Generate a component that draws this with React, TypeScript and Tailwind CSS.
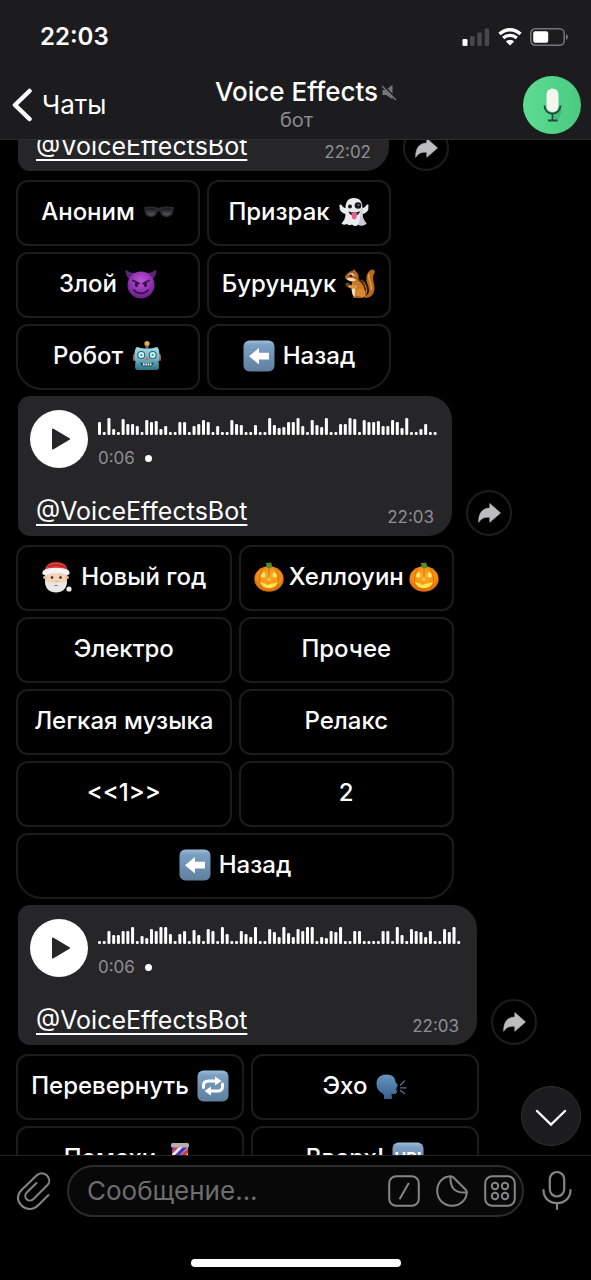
import React from "react";

type EmojiName =
  | "glasses" | "ghost" | "devil" | "chipmunk" | "robot" | "back" | "santa"
  | "pumpkin" | "repeat" | "speaking" | "barber" | "up";

function TileGradient({ id }: { id: string }) {
  return (
    <>
      <defs>
        <linearGradient id={id} x1="0" y1="0" x2="0" y2="1">
          <stop offset="0" stopColor="#9cc0de" />
          <stop offset="0.15" stopColor="#7c9fc2" />
          <stop offset="1" stopColor="#5f7f9f" />
        </linearGradient>
      </defs>
      <rect x="0.5" y="0.5" width="31" height="31" rx="6" fill={`url(#${id})`} />
    </>
  );
}

const emojis: Record<EmojiName, React.ReactNode> = {
  glasses: (
    <>
      <defs>
        <linearGradient id="lens" x1="0" y1="0" x2="0" y2="1">
          <stop offset="0" stopColor="#15181a" />
          <stop offset="1" stopColor="#555a5e" />
        </linearGradient>
      </defs>
      <path d="M1 11.5 C6 10 12 10.5 15.500 12 C19 10.500 26 10 31 11.500 L30.500 14 C30 19 27.500 21 23.500 21 C19.500 21 17.500 18.500 17 15.500 L14.500 15.500 C14 18.500 12 21 8 21 C4 21 2 19 1.500 14Z" fill="#2a2b2d" />
      <path d="M3 13 C6 12 11 12 13.500 13.500 C13 17.500 11 19.500 8 19.500 C5 19.500 3 17.500 3 13Z" fill="url(#lens)" />
      <path d="M18 13.500 C21 12 26 12 29 13 C29 17.500 27 19.500 23.500 19.500 C20.500 19.500 18.500 17.500 18 13.500Z" fill="url(#lens)" />
    </>
  ),
  ghost: (
    <>
      <path d="M16 2 C10 2 7.500 6 7.500 12 C5.500 12 4.500 10.500 3.500 9 C2.500 8 1 8.800 1.500 10.200 C2 12 1.200 13 2.200 14.200 C3.500 16.500 5.500 17.500 7.500 18 C7.500 22 6 24.500 3.500 27.500 C5 29 7 29 9 28 C10.500 29.500 12.500 29.800 14 28.500 C16 30.500 18.500 30.500 20 28.500 C22 30 25.500 30 28.500 27.500 C26 24.500 24.500 22 24.500 18 C27 17.500 28.500 16.500 30 14.200 C31 13 29.800 12 30.500 10.200 C31 8.800 29.500 8 28.500 9 C27.500 10.500 26.500 12 24.500 12 C24.500 6 22 2 16 2Z" fill="#e9ebef" />
      <path d="M24.500 18 C24.500 22 26 24.500 28.500 27.500 C25.500 30 22 30 20 28.500 C22.500 24 22.500 18 22.500 12 L24.500 12Z" fill="#c6cad2" />
      <circle cx="12" cy="10.500" r="2" fill="#17181b" />
      <circle cx="20" cy="9.500" r="3.300" fill="#17181b" />
      <circle cx="20.500" cy="9" r="1" fill="#70757d" />
      <path d="M10.500 15.500 C14 17 18.500 17 22 15 C21.500 18 19.500 19.500 16 19.500 C13 19.500 11 18 10.500 15.500Z" fill="#2a1015" />
      <path d="M13.500 17 L19 17 L18.500 21.500 C18 24 14.500 24 14 21.500Z" fill="#ee5c8c" />
    </>
  ),
  devil: (
    <>
      <defs>
        <radialGradient id="devil-face" cx="0.5" cy="0.35" r="0.65">
          <stop offset="0" stopColor="#b757d2" />
          <stop offset="0.6" stopColor="#9231b4" />
          <stop offset="1" stopColor="#662086" />
        </radialGradient>
      </defs>
      <path d="M0.800 1.500 C0.200 6 2 9 4.500 11.500 L11 5.500 C7 5 3.500 4 0.800 1.500Z M31.200 1.500 C31.800 6 30 9 27.500 11.500 L21 5.500 C25 5 28.500 4 31.200 1.500Z" fill="#5e2273" />
      <circle cx="16" cy="17" r="13.500" fill="url(#devil-face)" />
      <path d="M8 12.500 L14 15.500 M24 12.500 L18 15.500" stroke="#371046" strokeWidth="1.800" strokeLinecap="round" />
      <ellipse cx="11.500" cy="16.800" rx="1.700" ry="2.400" fill="#371046" />
      <ellipse cx="20.500" cy="16.800" rx="1.700" ry="2.400" fill="#371046" />
      <path d="M9 22 C12.500 26.500 19.500 26.500 23 22" stroke="#371046" strokeWidth="1.800" fill="none" strokeLinecap="round" />
    </>
  ),
  chipmunk: (
    <>
      <path d="M20 28 C27 27 25 20 23 15 C21 8 24 1.500 29 1.500 C31 2 31.500 4 30 6 C27.500 10 30.500 14 30.500 20 C30.500 26 27 30 21 30Z" fill="#b8671b" />
      <path d="M25 6 C23.500 11 28 15 27.500 22" stroke="#e2a047" strokeWidth="1.500" fill="none" />
      <path d="M8 14 C12 10 18 11 21 15 C25 20 24 28 18 30 L10 30 C8 25 7 19 8 14Z" fill="#cc7a25" />
      <path d="M8.500 17 C12 18 12 25 10 29 C7.500 26 7 20 8.500 17Z" fill="#f2dfb8" />
      <path d="M15 12 C20 15 22 20 21 26 M18 11.500 C22.500 15 23.500 18 23.500 22" stroke="#3d2310" strokeWidth="1.500" fill="none" />
      <path d="M1 8.500 C3 5 6 3 8.500 3 C9 0.800 11.500 0.800 11.800 3.500 C14.500 5 15.500 9 14 12.500 C10 15 5 13 2.500 11 C1.500 10.500 0.800 9.500 1 8.500Z" fill="#ad6423" />
      <path d="M2 10.500 C5 9 9 9.500 12.500 12 C9 14.500 5 13.500 2 10.500Z M4 6.500 L8 5 L12 8" fill="#f0d9ad" />
      <circle cx="6.800" cy="7.700" r="1.200" fill="#1d100a" />
      <path d="M13 17 C10 18.500 7 17.500 4 15.500 L2.500 17.500 C5 21 10 21.500 13 20Z" fill="#d89541" />
      <circle cx="3.500" cy="16.500" r="2" fill="#7d431a" />
      <ellipse cx="17" cy="25" rx="4.500" ry="4.500" fill="#db8b30" />
      <path d="M9 30 C11 27 16 27.500 19 30Z" fill="#a45e20" />
    </>
  ),
  robot: (
    <>
      <defs>
        <linearGradient id="robot-face" x1="0" y1="0" x2="0" y2="1">
          <stop offset="0" stopColor="#a8dce2" />
          <stop offset="0.5" stopColor="#6fb7c6" />
          <stop offset="1" stopColor="#2c7287" />
        </linearGradient>
      </defs>
      <rect x="2" y="14" width="4" height="7" rx="1.500" fill="#b1544d" />
      <rect x="26" y="14" width="4" height="7" rx="1.500" fill="#b1544d" />
      <circle cx="16" cy="3.500" r="2.600" fill="#e7ae50" />
      <rect x="14.500" y="5.500" width="3" height="3" fill="#547b86" />
      <path d="M6.500 7 C12 9 20 9 25.500 7 C28 7.500 28.500 12 28.500 16 C28.500 20 28 20 27.500 21 L28 27 C28 29 27 30 25 30 L7 30 C5 30 4 29 4 27 L4.500 21 C4 20 3.500 20 3.500 16 C3.500 12 4 7.500 6.500 7Z" fill="url(#robot-face)" />
      <circle cx="10.300" cy="15" r="4" fill="#286476" />
      <circle cx="21.700" cy="15" r="4" fill="#286476" />
      <circle cx="10.300" cy="15" r="2.900" fill="#d9f6f4" />
      <circle cx="21.700" cy="15" r="2.900" fill="#d9f6f4" />
      <circle cx="10.300" cy="15" r="1.200" fill="#489ead" />
      <circle cx="21.700" cy="15" r="1.200" fill="#489ead" />
      <path d="M16 16.500 L18.200 20 H13.800Z" fill="#d66356" />
      <path d="M9.500 22 L12 23.500 H20 L22.500 22 V24 L20.500 26.500 H11.500 L9.500 24Z" fill="#24515e" />
      <path d="M12 24.500 H20.500" stroke="#f3f3e8" strokeWidth="1.800" strokeDasharray="1.500 0.800" />
    </>
  ),
  back: (
    <>
      <TileGradient id="tile-back" />
      <path d="M6 16.200 L16 8 V12.800 H26 V19.600 H16 V24.500Z" fill="#fff" />
    </>
  ),
  santa: (
    <>
      <path d="M4 12 L4 21 C4 27 9 31 15 31 C21 31 26 27 26 21 V12Z" fill="#f4d3b8" />
      <circle cx="4" cy="16.500" r="1.800" fill="#e4b798" />
      <circle cx="26" cy="16.500" r="1.800" fill="#e4b798" />
      <path d="M3.500 10 C4.500 4 9 1 15 1 C22 1 26.500 4 27 11 L27 15 L25 13Z" fill="#d83a35" />
      <path d="M7 6 C12 3.500 19 3.500 25 7" stroke="#a8211f" strokeWidth="1" fill="none" />
      <path d="M3 9 C8 6 22 6 27 9 C29.500 11 29 14 26.500 14 C20 11.800 10 11.800 3.500 14 C1 14 0.500 11 3 9Z" fill="#f5f4f5" />
      <circle cx="11" cy="16.500" r="1.300" fill="#352620" />
      <circle cx="19.500" cy="16.500" r="1.300" fill="#352620" />
      <path d="M13.500 20 C14.500 21.300 16.500 21.300 17.500 20Z" fill="#d89c7d" />
      <path d="M4.500 20 C8 22.500 12 21.500 15 21.500 C18 21.500 22 22.500 25.500 20 C26 28 21 31.500 15 31.500 C9 31.500 4 28 4.500 20Z" fill="#e7e8ea" />
      <path d="M12.500 24 C13.500 25.300 16.500 25.300 17.500 24Z" fill="#b36c60" />
      <circle cx="28" cy="28" r="2.600" fill="#eeeef1" />
    </>
  ),
  pumpkin: (
    <>
      <defs>
        <radialGradient id="pumpkin-skin" cx="0.5" cy="0.4" r="0.6">
          <stop offset="0" stopColor="#ffae26" />
          <stop offset="0.7" stopColor="#f28c12" />
          <stop offset="1" stopColor="#cf6307" />
        </radialGradient>
      </defs>
      <ellipse cx="16" cy="18" rx="14.700" ry="12.800" fill="url(#pumpkin-skin)" />
      <path d="M11 6 C5 12 5 24 11 30 M21 6 C27 12 27 24 21 30 M16 6 V16" stroke="#d87108" strokeWidth="1" fill="none" />
      <path d="M13 6 C14 4 13 3 12.500 2 L18.500 1.500 C18 3 19 4.500 20 6 C18 7.500 15 7.500 13 6Z" fill="#548b2c" />
      <path d="M8 15.500 C8.500 12.500 10 11 11.500 11 C12.200 12.500 12.500 14 12 16 C11 16.800 9 16.800 8 15.500Z M24 15.500 C23.500 12.500 22 11 20.500 11 C19.800 12.500 19.500 14 20 16 C21 16.800 23 16.800 24 15.500Z M16 17 L17.600 19.200 H14.400Z" fill="#ffed6b" />
      <path d="M7 20.500 C9 22 11 22.500 13 22.500 L13.500 24 L16 23.500 L18 22.500 C21 22.500 23 22 25 20.500 C24 24.500 20.500 27 16 27 C11.500 27 8 24.500 7 20.500Z" fill="#ffe84f" />
    </>
  ),
  repeat: (
    <>
      <TileGradient id="tile-repeat" />
      <path d="M6.500 17.500 V15.500 C6.500 12.500 8.500 11 11.500 11 H19 M25.500 14 V16.500 C25.500 19.500 23.500 21 20.500 21 H13" fill="none" stroke="#fff" strokeWidth="3" strokeLinecap="round" />
      <path d="M18 6.500 L24.500 11 L18 15.500Z M14 16.500 L7.500 21 L14 25.500Z" fill="#fff" />
    </>
  ),
  speaking: (
    <>
      <defs>
        <linearGradient id="head" x1="0" y1="0" x2="0" y2="1">
          <stop offset="0" stopColor="#6795bf" />
          <stop offset="1" stopColor="#36608c" />
        </linearGradient>
      </defs>
      <path d="M1.500 13.500 C1.500 7.500 6 4.500 11.500 4.500 C17 4.500 20.500 7.500 20.500 12 L23 15.500 C23 16.500 21.500 16.500 21.500 17 L22 18.500 L20.500 19.500 L22 20.500 C22.500 23.500 20.500 24.500 16.500 24 L17 29 H9 C9.500 25 8.500 23.500 6 22.500 C3 21 1.500 17.500 1.500 13.500Z" fill="url(#head)" />
      <path d="M25.500 15 L29.500 11 M25.500 17.800 H31 M25.500 20.500 L29.500 23.500" stroke="#557692" strokeWidth="1.300" strokeLinecap="round" />
    </>
  ),
  barber: (
    <>
      <rect x="8" y="3" width="16" height="26" fill="#e9e9f5" />
      <path d="M9 15 L19 5 H24 L12 17Z M8 4 H13 L8 9Z M24 14 V20 L15 29 H9Z" fill="#4437b8" />
      <path d="M8 9 L13 4 H16 L8 12Z M12 17 L24 6 V11 L15 21Z" fill="#d13b3d" />
      <rect x="7" y="1" width="18" height="4.500" rx="1.500" fill="#b7adad" />
      <rect x="7" y="27" width="18" height="4" rx="1.500" fill="#8e8888" />
    </>
  ),
  up: <TileGradient id="tile-up" />,
};

function Emoji({ name }: { name: EmojiName }) {
  if (name === "up") {
    return (
      <span className="relative flex size-8 shrink-0 items-center justify-center text-[16px] leading-5 font-bold text-white">
        <svg viewBox="0 0 32 32" className="absolute inset-0 size-8" aria-hidden="true">{emojis.up}</svg>
        <span className="relative">UP!</span>
      </span>
    );
  }
  return (
    <svg viewBox="0 0 32 32" className="size-8 shrink-0" aria-hidden="true">
      {emojis[name]}
    </svg>
  );
}

interface Key {
  label: string;
  before?: EmojiName;
  after?: EmojiName;
  tight?: boolean;
  wide?: boolean;
}

function Keyboard({ keys, closed = true }: { keys: Key[]; closed?: boolean }) {
  return (
    <div className="mt-[9px] mb-1.5 grid grid-cols-2 gap-x-[7px] gap-y-1.5">
      {keys.map((key, i) => {
        const last = closed && i === keys.length - 1;
        const bottomLeft = closed && (key.wide || (i === keys.length - 2 && !keys[keys.length - 1].wide));
        return (
          <button
            key={key.label}
            type="button"
            className={[
              "flex h-[66px] items-center justify-center border-2 border-[#1c1c1d] bg-black pb-0.5 text-[24px] leading-8 font-medium whitespace-nowrap text-white",
              key.tight ? "gap-1" : "gap-2",
              key.wide ? "col-span-2" : "",
              "rounded-t-xl",
              last ? "rounded-br-[26px]" : "rounded-br-xl",
              bottomLeft ? "rounded-bl-[26px]" : "rounded-bl-xl",
            ].join(" ")}
          >
            {key.before && <Emoji name={key.before} />}
            <span>{key.label}</span>
            {key.after && <Emoji name={key.after} />}
          </button>
        );
      })}
    </div>
  );
}

const waveA = [
  13, 3, 17, 6, 3, 16, 11, 11, 9, 3, 15, 13, 14, 6, 9, 3, 3, 13, 13, 3, 9, 11, 15, 13, 3, 9, 3, 3, 15, 11, 10, 3, 3, 10, 3, 3,
  17, 10, 7, 8, 13, 13, 17, 9, 3, 15, 10, 8, 17, 3, 3, 11, 11, 17, 16, 3, 15, 13, 13, 14, 9, 9, 15, 13, 7, 17, 3, 3, 6, 11, 3, 3,
];
const waveB = [
  3, 3, 13, 9, 9, 13, 13, 17, 3, 8, 6, 15, 13, 17, 17, 10, 3, 10, 13, 3, 14, 9, 3, 15, 13, 3, 17, 10, 3, 3, 13, 10, 7, 17, 3, 3,
  15, 12, 7, 17, 11, 7, 15, 13, 17, 17, 3, 7, 6, 13, 12, 17, 3, 3, 13, 13, 3, 3, 3, 3, 13, 13, 3, 17, 9, 3, 15, 13, 12, 7, 13, 3, 3, 15, 12, 17, 3,
];

const barPitch = 4.727;

function Waveform({ bars }: { bars: number[] }) {
  const width = Math.ceil(bars.length * barPitch);
  return (
    <svg width={width} height="18" viewBox={`0 0 ${width} 18`} aria-hidden="true">
      {bars.map((h, i) => (
        <rect key={i} x={i * barPitch} y={18 - h} width="3" height={h} rx="1.2" fill="#fff" />
      ))}
    </svg>
  );
}

function Player({ bars }: { bars: number[] }) {
  return (
    <div className="mb-[27px] flex gap-2.5 pl-3">
      <button type="button" aria-label="Play" className="flex size-[58px] shrink-0 items-center justify-center rounded-full bg-white">
        <svg width="20" height="24" viewBox="0 0 20 24" className="ml-1" aria-hidden="true">
          <path d="M2 2.500 L18 12 L2 21.500Z" fill="#262628" stroke="#262628" strokeWidth="2" strokeLinejoin="round" />
        </svg>
      </button>
      <div className="flex min-w-0 flex-col gap-[13px] pt-[7px]">
        <Waveform bars={bars} />
        <div className="flex items-center gap-2.5 text-[17px] leading-5 text-[#8e8e92]">
          <span>0:06</span>
          <span className="size-[7px] rounded-full bg-white" />
        </div>
      </div>
    </div>
  );
}

function Message({ bars, time }: { bars?: number[]; time: string }) {
  return (
    <div className="relative mx-0.5">
      <article className="flex flex-col rounded-l-xl rounded-r-3xl bg-[#262628] pt-3.5 pb-[7px]">
        {bars && <Player bars={bars} />}
        <div className="flex items-end justify-between px-[18px]">
          <a href="#voice-effects-bot" className="mb-0.5 text-[25px] leading-8 text-white underline decoration-2 underline-offset-4 [text-decoration-skip-ink:none]">
            @VoiceEffectsBot
          </a>
          <time className="text-[17px] leading-6 text-[#8e8e92]">{time}</time>
        </div>
      </article>
      <button
        type="button"
        aria-label="Forward"
        className="absolute bottom-0 left-full ml-3.5 flex size-[46px] items-center justify-center rounded-full border-2 border-[#1d1d1e] bg-black"
      >
        <svg width="23" height="20" viewBox="0 0 23 20" aria-hidden="true">
          <path d="M11.800 0.500 L22.500 9.900 L11.800 19.300 V14.300 C6.500 13.900 3.500 15 0.700 19.300 C0.500 10.500 4 5.400 11.800 5Z" fill="#bdbdbf" stroke="#bdbdbf" strokeWidth="0.600" strokeLinejoin="round" />
        </svg>
      </button>
    </div>
  );
}

function StatusBar() {
  return (
    <div className="flex h-[70px] items-center justify-between pt-1 pr-[22px] pl-10 text-white">
      <span className="text-[24px] leading-8 font-semibold">22:03</span>
      <div className="flex items-center gap-2">
        <svg width="28" height="18" viewBox="0 0 28 18" aria-hidden="true">
          <rect x="0.500" y="11" width="5" height="7" rx="1.300" fill="#fff" />
          <rect x="8" y="8" width="4.500" height="10" rx="1.300" fill="#48484a" />
          <rect x="15.300" y="4.500" width="4.500" height="13.500" rx="1.300" fill="#48484a" />
          <rect x="22.700" y="0.500" width="4.500" height="17.500" rx="1.300" fill="#48484a" />
        </svg>
        <svg width="24" height="18" viewBox="0 0 24 18" aria-hidden="true">
          <path d="M1.500 6 C7.500 0.300 16.500 0.300 22.500 6" stroke="#fff" strokeWidth="3.300" fill="none" />
          <path d="M5.200 10 C9 6.500 15 6.500 18.800 10" stroke="#fff" strokeWidth="3.300" fill="none" />
          <path d="M12 17.500 L7.900 13.400 C10 11.600 14 11.600 16.100 13.400Z" fill="#fff" />
        </svg>
        <svg width="39" height="18" viewBox="0 0 39 18" aria-hidden="true">
          <rect x="0.800" y="0.800" width="33.400" height="16.400" rx="4.500" fill="none" stroke="#77777a" strokeWidth="1.500" />
          <rect x="3.200" y="3.200" width="15" height="11.600" rx="2" fill="#fff" />
          <path d="M36 6 C38.500 7 38.500 11 36 12Z" fill="#77777a" />
        </svg>
      </div>
    </div>
  );
}

function Header() {
  return (
    <header className="relative z-10 shrink-0 border-b border-[#2e2e30] bg-[#1c1c1e]">
      <StatusBar />
      <div className="grid h-[69px] grid-cols-[1fr_auto_1fr] items-center pr-2.5 pl-3">
        <a href="#chats" className="flex items-center gap-2.5 text-[26px] leading-8 text-white">
          <svg width="20" height="34" viewBox="0 0 20 34" aria-hidden="true">
            <path d="M17.500 3 L3 17 L17.500 31" fill="none" stroke="#fff" strokeWidth="4.500" strokeLinecap="round" strokeLinejoin="round" />
          </svg>
          Чаты
        </a>
        <div className="flex flex-col items-center pb-0.5">
          <h1 className="relative text-[26px] leading-8 font-medium text-white">
            Voice Effects
            <svg width="16" height="17" viewBox="0 0 16 17" className="absolute top-2 left-full ml-1" aria-hidden="true">
              <path d="M0.500 6 H4 L10.500 0.800 V15.200 L4 11 H0.500Z" fill="#747477" />
              <path d="M0.500 1 L15 15.500" stroke="#1c1c1e" strokeWidth="2" />
              <path d="M0 2 L14 16" stroke="#747477" strokeWidth="1.500" />
            </svg>
          </h1>
          <p className="text-[20px] leading-6 text-[#8a8a8e]">бот</p>
        </div>
        <button type="button" aria-label="Voice Effects" className="size-[58px] justify-self-end rounded-full">
          <svg width="58" height="58" viewBox="0 0 58 58" aria-hidden="true">
            <defs>
              <linearGradient id="avatar" x1="0" x2="1">
                <stop offset="0" stopColor="#5edb94" />
                <stop offset="1" stopColor="#49cb80" />
              </linearGradient>
            </defs>
            <circle cx="29" cy="29" r="29" fill="url(#avatar)" />
            <path d="M36 30 L39 34 L36 44 L33 47 L31 41Z" fill="#2fa764" opacity="0.450" />
            <path d="M21.500 29.500 C21.500 40.500 37.500 40.500 37.500 29.500 M29.500 38 V44.500 M25 44.500 H34.500" fill="none" stroke="#1d4a3c" strokeWidth="1.800" />
            <rect x="23.500" y="12.500" width="12" height="23.500" rx="6" fill="#f4f5ee" />
          </svg>
        </button>
      </div>
    </header>
  );
}

function Composer() {
  return (
    <footer className="relative shrink-0 border-t border-[#232324] bg-black">
      <form className="flex items-center pt-[9px] pr-[18px] pl-4" onSubmit={(e) => e.preventDefault()}>
        <button type="button" aria-label="Attach" className="mr-4 shrink-0">
          <svg width="35" height="40" viewBox="0 0 35 40" fill="none" stroke="#858587" strokeWidth="2" strokeLinecap="round" strokeLinejoin="round" aria-hidden="true">
            <path d="M32.500 24 L22.500 34 C17 39.500 10 39 5.500 34.500 C0.500 29.500 1 23.500 5.500 19 L20.500 4.500 C23.500 1.500 28 1.500 31 4.500 C34 7.500 34 11.500 31 14.500 L17.500 28 C15.500 30 12.500 30 10.700 28.200 C8.700 26.200 8.800 23.500 10.800 21.500 L20.500 12" />
          </svg>
        </button>
        <div className="flex h-[52px] min-w-0 flex-1 items-center gap-4 rounded-full border-2 border-[#2b2b2c] bg-[#080808] pr-1.5 pl-[18px] text-[#858587]">
          <input
            type="text"
            aria-label="Сообщение"
            placeholder="Сообщение..."
            className="min-w-0 flex-1 bg-transparent text-[26px] leading-8 text-white outline-none placeholder:text-[#6d6d70]"
          />
          <button type="button" aria-label="Commands" className="shrink-0">
            <svg width="32" height="32" viewBox="0 0 32 32" fill="none" stroke="currentColor" strokeWidth="2" strokeLinecap="round" aria-hidden="true">
              <rect x="1.200" y="1.200" width="29.600" height="29.600" rx="7" />
              <path d="M20.500 8.500 L12 23.500" />
            </svg>
          </button>
          <button type="button" aria-label="Stickers" className="shrink-0">
            <svg width="32" height="32" viewBox="0 0 32 32" fill="none" stroke="currentColor" strokeWidth="2" strokeLinecap="round" strokeLinejoin="round" aria-hidden="true">
              <path d="M14.500 1.200 C6.500 1.500 1.200 8 1.200 16 A14.800 14.800 0 0 0 16 30.800 C24 30.800 30.500 25 30.800 17.500 C31 16 30.500 15.500 29.500 14.500 L17.500 2.500 C16.500 1.500 16 1.200 14.500 1.200Z" />
              <path d="M14.500 1.500 C14 12 18 18.500 30.500 17.500" />
            </svg>
          </button>
          <button type="button" aria-label="Bot keyboard" className="shrink-0">
            <svg width="32" height="32" viewBox="0 0 32 32" fill="none" stroke="currentColor" strokeWidth="2" aria-hidden="true">
              <rect x="1.200" y="1.200" width="29.600" height="29.600" rx="7" />
              <circle cx="11" cy="11" r="3.200" />
              <circle cx="21" cy="11" r="3.200" />
              <circle cx="11" cy="21" r="3.200" />
              <circle cx="21" cy="21" r="3.200" />
            </svg>
          </button>
        </div>
        <button type="button" aria-label="Record voice message" className="ml-[17px] shrink-0">
          <svg width="32" height="42" viewBox="0 0 32 42" fill="none" stroke="#858587" strokeWidth="2.200" strokeLinecap="round" aria-hidden="true">
            <rect x="8.800" y="2" width="14.400" height="24.500" rx="7.200" />
            <path d="M2.500 20 C2.500 37.500 29.500 37.500 29.500 20 M16 33.500 V39" />
          </svg>
        </button>
      </form>
      <div className="mx-auto mt-[42px] mb-[13px] h-2 w-[210px] rounded-full bg-white" />
    </footer>
  );
}

export default function App() {
  return (
    <div className="flex h-screen flex-col overflow-hidden bg-black font-['Inter','Noto_Sans',sans-serif]">
      <Header />
      <main className="relative min-h-0 flex-1 overflow-hidden">
        <div className="-mt-6 flex flex-col pl-4">
          <section className="w-[375px] max-w-[85%]">
            <Message time="22:02" />
            <Keyboard
              keys={[
                { label: "Аноним", after: "glasses" },
                { label: "Призрак", after: "ghost" },
                { label: "Злой", after: "devil" },
                { label: "Бурундук", after: "chipmunk" },
                { label: "Робот", after: "robot" },
                { label: "Назад", before: "back" },
              ]}
            />
          </section>
          <section className="w-[438px] max-w-[85%]">
            <Message bars={waveA} time="22:03" />
            <Keyboard
              keys={[
                { label: "Новый год", before: "santa" },
                { label: "Хеллоуин", before: "pumpkin", after: "pumpkin", tight: true },
                { label: "Электро" },
                { label: "Прочее" },
                { label: "Легкая музыка" },
                { label: "Релакс" },
                { label: "<<1>>" },
                { label: "2" },
                { label: "Назад", before: "back", wide: true },
              ]}
            />
          </section>
          <section className="w-[463px] max-w-[85%]">
            <Message bars={waveB} time="22:03" />
            <Keyboard
              closed={false}
              keys={[
                { label: "Перевернуть", after: "repeat" },
                { label: "Эхо", after: "speaking" },
                { label: "Помехи", after: "barber" },
                { label: "Вверх!", after: "up" },
              ]}
            />
          </section>
        </div>
        <button
          type="button"
          aria-label="Scroll to latest"
          className="absolute right-2.5 bottom-[9px] flex size-[60px] items-center justify-center rounded-full border border-[#303032] bg-[#1c1c1e]"
        >
          <svg width="32" height="18" viewBox="0 0 32 18" className="mt-1" aria-hidden="true">
            <path d="M2 2 L16 15.500 L30 2" fill="none" stroke="#fff" strokeWidth="2.400" strokeLinecap="round" />
          </svg>
        </button>
      </main>
      <Composer />
    </div>
  );
}
